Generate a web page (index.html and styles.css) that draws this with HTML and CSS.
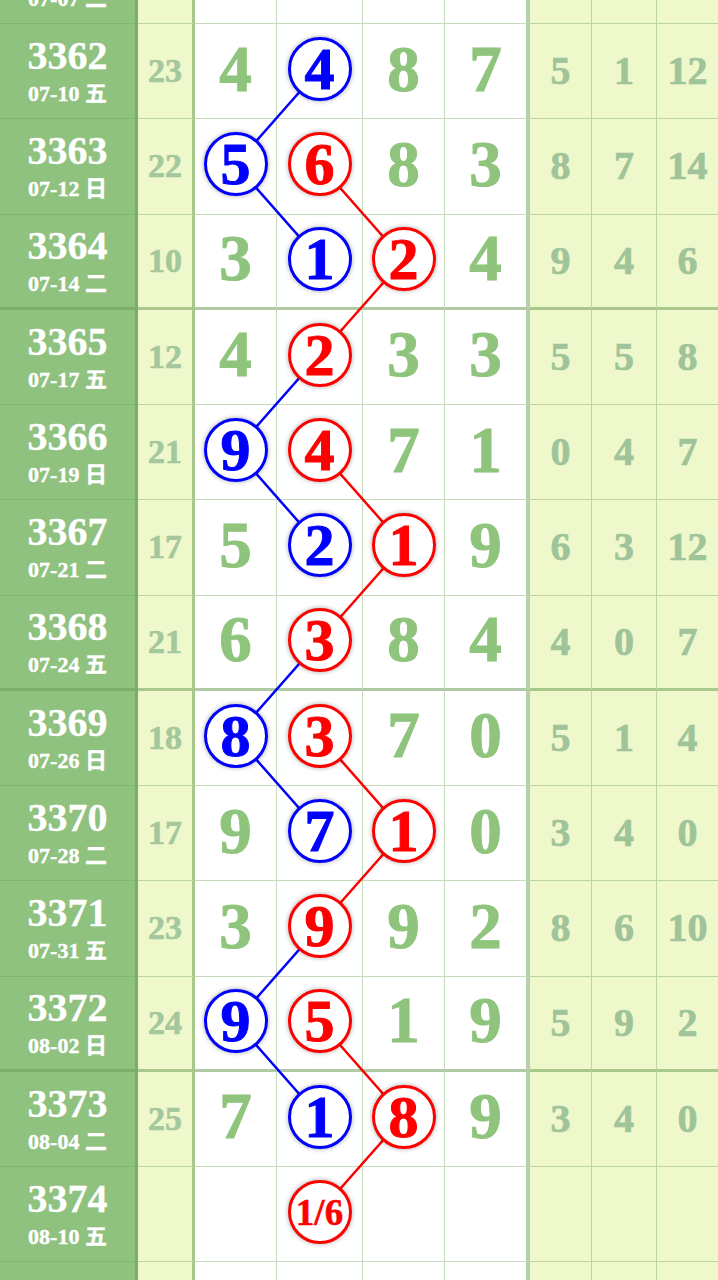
FILE: index.html
```html
<!DOCTYPE html>
<html lang="zh">

<head>
    <meta charset="UTF-8">
    <meta name="viewport" content="width=device-width, initial-scale=1.0">
    <title>走势图</title>
    <link rel="stylesheet" href="styles.css">
</head>

<body>
    <div class="chart">
        <svg class="links" width="718" height="1429" viewBox="0 0 718 1429">
            <g class="blue">
                <polyline points="319.5,140.25 235.5,235.5 319.5,330.75" />
                <polyline points="319.5,426 235.5,521.25 319.5,616.5" />
                <polyline points="319.5,711.75 235.5,807 319.5,902.25" />
                <polyline points="319.5,997.5 235.5,1092.75 319.5,1188" />
            </g>
            <g class="red">
                <polyline points="319.5,235.5 403.5,330.75 319.5,426" />
                <polyline points="319.5,521.25 403.5,616.5 319.5,711.75" />
                <polyline points="319.5,807 403.5,902.25 319.5,997.5" />
                <polyline points="319.5,1092.75 403.5,1188 319.5,1283.25" />
            </g>
        </svg>

        <div class="row">
            <div class="cell label"><span class="issue">3361</span><span class="date">07-07 二</span></div>
            <div class="cell sum"></div>
            <div class="cell num"></div>
            <div class="cell num"></div>
            <div class="cell num"></div>
            <div class="cell num last"></div>
            <div class="cell tail"></div>
            <div class="cell tail"></div>
            <div class="cell tail end"></div>
        </div>

        <div class="row">
            <div class="cell label"><span class="issue">3362</span><span class="date">07-10 五</span></div>
            <div class="cell sum">23</div>
            <div class="cell num">4</div>
            <div class="cell num"><span class="ball b">4</span></div>
            <div class="cell num">8</div>
            <div class="cell num last">7</div>
            <div class="cell tail">5</div>
            <div class="cell tail">1</div>
            <div class="cell tail end">12</div>
        </div>

        <div class="row">
            <div class="cell label"><span class="issue">3363</span><span class="date">07-12 日</span></div>
            <div class="cell sum">22</div>
            <div class="cell num"><span class="ball b">5</span></div>
            <div class="cell num"><span class="ball r">6</span></div>
            <div class="cell num">8</div>
            <div class="cell num last">3</div>
            <div class="cell tail">8</div>
            <div class="cell tail">7</div>
            <div class="cell tail end">14</div>
        </div>

        <div class="row sep">
            <div class="cell label"><span class="issue">3364</span><span class="date">07-14 二</span></div>
            <div class="cell sum">10</div>
            <div class="cell num">3</div>
            <div class="cell num"><span class="ball b">1</span></div>
            <div class="cell num"><span class="ball r">2</span></div>
            <div class="cell num last">4</div>
            <div class="cell tail">9</div>
            <div class="cell tail">4</div>
            <div class="cell tail end">6</div>
        </div>

        <div class="row">
            <div class="cell label"><span class="issue">3365</span><span class="date">07-17 五</span></div>
            <div class="cell sum">12</div>
            <div class="cell num">4</div>
            <div class="cell num"><span class="ball r">2</span></div>
            <div class="cell num">3</div>
            <div class="cell num last">3</div>
            <div class="cell tail">5</div>
            <div class="cell tail">5</div>
            <div class="cell tail end">8</div>
        </div>

        <div class="row">
            <div class="cell label"><span class="issue">3366</span><span class="date">07-19 日</span></div>
            <div class="cell sum">21</div>
            <div class="cell num"><span class="ball b">9</span></div>
            <div class="cell num"><span class="ball r">4</span></div>
            <div class="cell num">7</div>
            <div class="cell num last">1</div>
            <div class="cell tail">0</div>
            <div class="cell tail">4</div>
            <div class="cell tail end">7</div>
        </div>

        <div class="row">
            <div class="cell label"><span class="issue">3367</span><span class="date">07-21 二</span></div>
            <div class="cell sum">17</div>
            <div class="cell num">5</div>
            <div class="cell num"><span class="ball b">2</span></div>
            <div class="cell num"><span class="ball r">1</span></div>
            <div class="cell num last">9</div>
            <div class="cell tail">6</div>
            <div class="cell tail">3</div>
            <div class="cell tail end">12</div>
        </div>

        <div class="row sep">
            <div class="cell label"><span class="issue">3368</span><span class="date">07-24 五</span></div>
            <div class="cell sum">21</div>
            <div class="cell num">6</div>
            <div class="cell num"><span class="ball r">3</span></div>
            <div class="cell num">8</div>
            <div class="cell num last">4</div>
            <div class="cell tail">4</div>
            <div class="cell tail">0</div>
            <div class="cell tail end">7</div>
        </div>

        <div class="row">
            <div class="cell label"><span class="issue">3369</span><span class="date">07-26 日</span></div>
            <div class="cell sum">18</div>
            <div class="cell num"><span class="ball b">8</span></div>
            <div class="cell num"><span class="ball r">3</span></div>
            <div class="cell num">7</div>
            <div class="cell num last">0</div>
            <div class="cell tail">5</div>
            <div class="cell tail">1</div>
            <div class="cell tail end">4</div>
        </div>

        <div class="row">
            <div class="cell label"><span class="issue">3370</span><span class="date">07-28 二</span></div>
            <div class="cell sum">17</div>
            <div class="cell num">9</div>
            <div class="cell num"><span class="ball b">7</span></div>
            <div class="cell num"><span class="ball r">1</span></div>
            <div class="cell num last">0</div>
            <div class="cell tail">3</div>
            <div class="cell tail">4</div>
            <div class="cell tail end">0</div>
        </div>

        <div class="row">
            <div class="cell label"><span class="issue">3371</span><span class="date">07-31 五</span></div>
            <div class="cell sum">23</div>
            <div class="cell num">3</div>
            <div class="cell num"><span class="ball r">9</span></div>
            <div class="cell num">9</div>
            <div class="cell num last">2</div>
            <div class="cell tail">8</div>
            <div class="cell tail">6</div>
            <div class="cell tail end">10</div>
        </div>

        <div class="row sep">
            <div class="cell label"><span class="issue">3372</span><span class="date">08-02 日</span></div>
            <div class="cell sum">24</div>
            <div class="cell num"><span class="ball b">9</span></div>
            <div class="cell num"><span class="ball r">5</span></div>
            <div class="cell num">1</div>
            <div class="cell num last">9</div>
            <div class="cell tail">5</div>
            <div class="cell tail">9</div>
            <div class="cell tail end">2</div>
        </div>

        <div class="row">
            <div class="cell label"><span class="issue">3373</span><span class="date">08-04 二</span></div>
            <div class="cell sum">25</div>
            <div class="cell num">7</div>
            <div class="cell num"><span class="ball b">1</span></div>
            <div class="cell num"><span class="ball r">8</span></div>
            <div class="cell num last">9</div>
            <div class="cell tail">3</div>
            <div class="cell tail">4</div>
            <div class="cell tail end">0</div>
        </div>

        <div class="row">
            <div class="cell label"><span class="issue">3374</span><span class="date">08-10 五</span></div>
            <div class="cell sum"></div>
            <div class="cell num"></div>
            <div class="cell num"><span class="ball r small">1/6</span></div>
            <div class="cell num"></div>
            <div class="cell num last"></div>
            <div class="cell tail"></div>
            <div class="cell tail"></div>
            <div class="cell tail end"></div>
        </div>

        <div class="row">
            <div class="cell label"></div>
            <div class="cell sum"></div>
            <div class="cell num"></div>
            <div class="cell num"></div>
            <div class="cell num"></div>
            <div class="cell num last"></div>
            <div class="cell tail"></div>
            <div class="cell tail"></div>
            <div class="cell tail end"></div>
        </div>
    </div>
</body>

</html>
```

FILE: styles.css
```css
body {
    margin: 0;
    background-color: #ffffff;
    font-family: "Liberation Serif", "Noto Sans CJK SC", serif;
    font-weight: bold;
    overflow: hidden;
}

.chart {
    position: relative;
    width: 718px;
    margin-top: -71.25px;
}

.links {
    position: absolute;
    top: 0;
    left: 0;
    z-index: 1;
    pointer-events: none;
}

.links polyline {
    fill: none;
    stroke-width: 2.5;
}

.links .blue polyline {
    stroke: #0000ff;
}

.links .red polyline {
    stroke: #ff0000;
}

.row {
    display: grid;
    grid-template-columns: 138px 57px 82px 86px 82px 85px 62px 65px 61px;
    height: 95.25px;
}

.cell {
    box-sizing: border-box;
    display: flex;
    justify-content: center;
    align-items: center;
    border-bottom: 1px solid rgba(110, 160, 90, 0.4);
    border-right: 1px solid rgba(110, 160, 90, 0.4);
    line-height: 1;
}

.row.sep .cell {
    border-bottom-width: 3px;
    border-bottom-color: rgba(110, 160, 90, 0.55);
}

.label {
    flex-direction: column;
    background-color: #8fc17f;
    color: #ffffff;
    border-right: 3px solid rgba(110, 160, 90, 0.6);
}

.issue {
    font-size: 40px;
    line-height: 40px;
    -webkit-text-stroke: 0.3px #ffffff;
}

.date {
    font-size: 22px;
    line-height: 24px;
    margin-top: 6px;
    -webkit-text-stroke: 0.4px #ffffff;
}

.sum {
    background-color: #eff8cb;
    color: #a4c79d;
    font-size: 34px;
    border-right: 3px solid rgba(110, 160, 90, 0.55);
    -webkit-text-stroke: 0.6px #a4c79d;
}

.num {
    background-color: #ffffff;
    color: #8ec47c;
    font-size: 65px;
    padding-bottom: 4px;
    -webkit-text-stroke: 1px #8ec47c;
}

.num.last {
    border-right: 4px solid rgba(110, 160, 90, 0.5);
}

.tail {
    background-color: #eff8cb;
    color: #a0c49a;
    font-size: 40px;
    -webkit-text-stroke: 0.7px #a0c49a;
}

.tail.end {
    border-right: none;
}

.ball {
    position: relative;
    z-index: 2;
    box-sizing: border-box;
    width: 64px;
    height: 64px;
    border-radius: 50%;
    border: 3px solid;
    background-color: #ffffff;
    box-shadow: 0 0 5px rgba(0, 0, 0, 0.35);
    display: flex;
    justify-content: center;
    align-items: center;
    font-size: 60px;
    -webkit-text-stroke: 1px currentColor;
}

.ball.b {
    color: #0000ff;
    border-color: #0000ff;
}

.ball.r {
    color: #ff0000;
    border-color: #ff0000;
}

.ball.small {
    font-size: 37px;
    -webkit-text-stroke: 0.5px currentColor;
}
```
